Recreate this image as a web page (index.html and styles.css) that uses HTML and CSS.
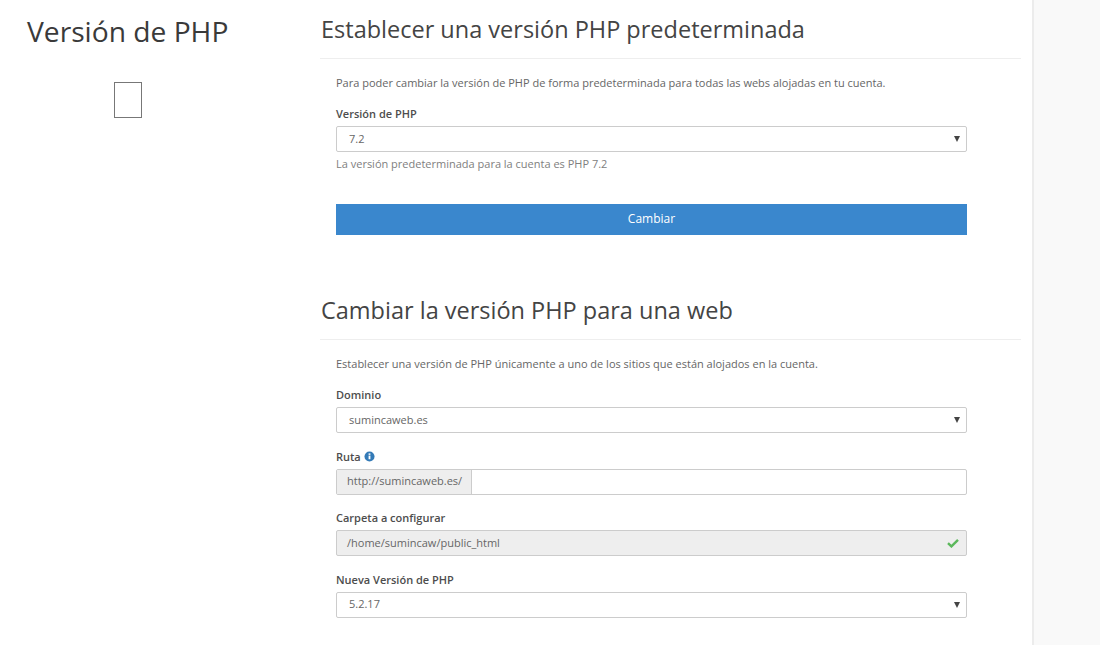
FILE: index.html
```html
<!DOCTYPE html>
<html lang="es">
<head>
    <meta charset="UTF-8">
    <title>Versión de PHP</title>
    <link rel="stylesheet" href="styles.css">
</head>
<body>
    <div class="page">
        <aside class="side">
            <h1>Versión de PHP</h1>
            <div class="side-icon"></div>
        </aside>
        <main class="content">
            <section class="block">
                <h2>Establecer una versión PHP predeterminada</h2>
                <div class="block-body">
                    <p class="desc">Para poder cambiar la versión de PHP de forma predeterminada para todas las webs alojadas en tu cuenta.</p>
                    <div class="field">
                        <label>Versión de PHP</label>
                        <div class="select"><span>7.2</span><i class="arrow"></i></div>
                        <p class="help">La versión predeterminada para la cuenta es PHP 7.2</p>
                    </div>
                    <button class="btn">Cambiar</button>
                </div>
            </section>
            <section class="block">
                <h2>Cambiar la versión PHP para una web</h2>
                <div class="block-body">
                    <p class="desc">Establecer una versión de PHP únicamente a uno de los sitios que están alojados en la cuenta.</p>
                    <div class="field">
                        <label>Dominio</label>
                        <div class="select"><span>sumincaweb.es</span><i class="arrow"></i></div>
                    </div>
                    <div class="field">
                        <label>Ruta
                            <svg class="info" viewBox="0 0 12 12" width="11" height="11"><circle cx="6" cy="6" r="5.5" fill="#337ab7"/><rect x="5" y="5" width="2" height="4" fill="#fff"/><rect x="5" y="2.6" width="2" height="1.6" fill="#fff"/></svg>
                        </label>
                        <div class="input-group">
                            <span class="addon">http://sumincaweb.es/</span>
                            <span class="input"></span>
                        </div>
                    </div>
                    <div class="field">
                        <label>Carpeta a configurar</label>
                        <div class="readonly">
                            <span>/home/sumincaw/public_html</span>
                            <svg viewBox="0 0 12 10" width="12" height="10"><path d="M1 5.2 L4.4 8.4 L11 1.8" fill="none" stroke="#5cb85c" stroke-width="2.4"/></svg>
                        </div>
                    </div>
                    <div class="field">
                        <label>Nueva Versión de PHP</label>
                        <div class="select"><span>5.2.17</span><i class="arrow"></i></div>
                    </div>
                </div>
            </section>
        </main>
        <div class="rail"></div>
    </div>
</body>
</html>
```

FILE: styles.css
```css
html, body {
    margin: 0;
    height: 100%;
    overflow: hidden;
}
body {
    font-family: "Open Sans", "Liberation Sans", sans-serif;
    font-size: 11px;
    color: #333;
    background-color: #fff;
}
.page {
    display: flex;
    height: 645px;
}
.side {
    width: 320px;
    flex: none;
    padding: 11px 0 0 27px;
    box-sizing: border-box;
}
.side h1 {
    margin: 0;
    font-size: 28.2px;
    font-weight: 400;
    line-height: 40px;
    color: #3a3a3a;
}
.side-icon {
    width: 26px;
    height: 34px;
    margin: 31px 0 0 87px;
    border: 1px solid #777;
}
.content {
    width: 701px;
    flex: none;
}
.block {
    margin-bottom: 46px;
}
.block h2 {
    margin: 0;
    padding: 12px 0 12px 1px;
    height: 34px;
    font-size: 23.5px;
    font-weight: 400;
    line-height: 34px;
    color: #444;
    border-bottom: 1px solid #eee;
}
.block-body {
    width: 631px;
    margin-left: 16px;
    padding-top: 16px;
}
.desc {
    margin: 0;
    line-height: 15px;
    color: #666;
}
.field {
    margin-top: 15.67px;
}
.block-body .field:nth-child(2) {
    margin-top: 16px;
}
.field label {
    display: block;
    line-height: 15px;
    margin-bottom: 5px;
    font-weight: 600;
    color: #4d4d4d;
}
.info {
    vertical-align: -1px;
}
.select, .input-group, .readonly {
    display: flex;
    align-items: center;
    height: 26px;
    box-sizing: border-box;
    border: 1px solid #ccc;
    border-radius: 2px;
}
.select span, .readonly span {
    padding-bottom: 2px;
}
.select {
    justify-content: space-between;
    padding: 0 6px 0 12px;
    color: #666;
}
.arrow {
    width: 0;
    height: 0;
    border-left: 3px solid transparent;
    border-right: 3px solid transparent;
    border-top: 6px solid #444;
}
.help {
    margin: 4px 0 0;
    line-height: 15px;
    color: #808080;
}
.btn {
    display: block;
    width: 100%;
    height: 31px;
    margin-top: 33px;
    padding: 0 0 2px;
    border: none;
    background-color: #3a87cd;
    color: #fff;
    font: inherit;
    font-size: 12px;
}
.input-group .addon {
    display: flex;
    align-items: center;
    height: 100%;
    padding: 0 9px 2px 10px;
    box-sizing: border-box;
    background-color: #eee;
    border-right: 1px solid #ccc;
    color: #666;
}
.input-group .input {
    flex: 1;
}
.readonly {
    justify-content: space-between;
    padding: 0 7px 0 10px;
    background-color: #eee;
    color: #666;
}
.rail {
    flex: 1;
    background-color: #f9f9f9;
    border-left: 2px solid #ececec;
    margin-left: 11px;
}
```
